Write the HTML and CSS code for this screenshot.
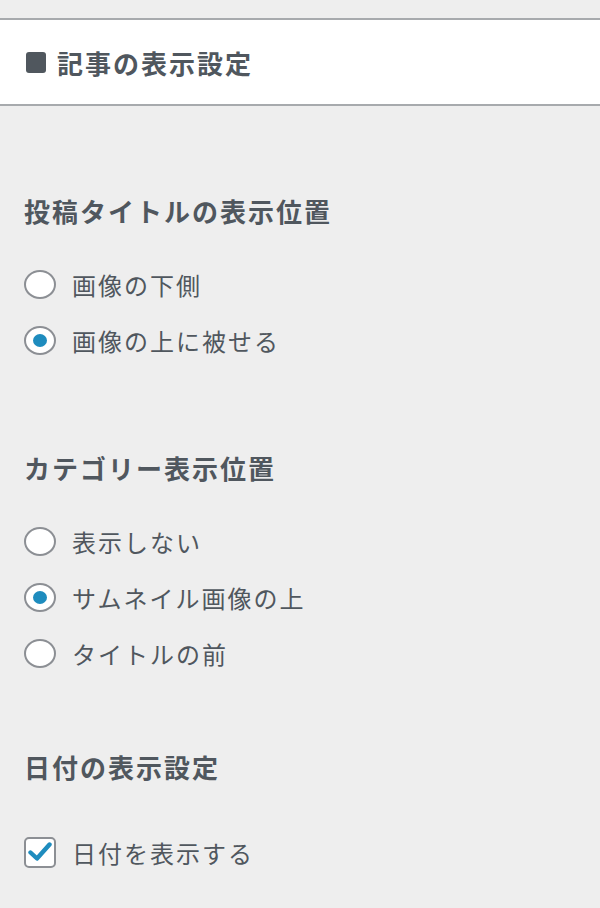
FILE: index.html
```html
<!doctype html>
<html lang="ja">
<head>
    <meta charset="utf-8">
    <title>記事の表示設定</title>
    <link rel="stylesheet" href="styles.css">
</head>
<body>
    <div class="top"></div>

    <div class="section-title">
        <span class="square"></span>
        <h2>記事の表示設定</h2>
    </div>

    <div class="group group-title">
        <p class="heading">投稿タイトルの表示位置</p>
        <label class="row"><span class="radio"></span>画像の下側</label>
        <label class="row"><span class="radio checked"></span>画像の上に被せる</label>
    </div>

    <div class="group group-cat">
        <p class="heading">カテゴリー表示位置</p>
        <label class="row"><span class="radio"></span>表示しない</label>
        <label class="row"><span class="radio checked"></span>サムネイル画像の上</label>
        <label class="row"><span class="radio"></span>タイトルの前</label>
    </div>

    <div class="group group-date">
        <p class="heading">日付の表示設定</p>
        <label class="row row-check">
            <span class="check">
                <svg width="24" height="20" viewBox="0 0 24 20"><path d="M2.5 10.5 L9 16.5 L21.5 2.5" fill="none" stroke="#1e8cbe" stroke-width="4.4" stroke-linecap="round" stroke-linejoin="round"/></svg>
            </span>日付を表示する
        </label>
    </div>
</body>
</html>
```

FILE: styles.css
```css
body {
    margin: 0;
    background: #eeeeee;
    font-family: "Noto Sans CJK JP", "Noto Sans", sans-serif;
    color: #50575e;
}
.top {
    height: 18px;
}
.section-title {
    display: flex;
    align-items: center;
    gap: 11px;
    height: 84px;
    padding-left: 26px;
    background: #ffffff;
    border-top: 2px solid #a7aaad;
    border-bottom: 2px solid #a7aaad;
}
.square {
    width: 20px;
    height: 21px;
    border-radius: 3px;
    background: #50575e;
}
h2 {
    margin: 0;
    font-size: 26px;
    font-weight: bold;
    letter-spacing: 2px;
}
.group {
    padding-left: 24px;
}
.heading {
    margin: 0;
    height: 40px;
    line-height: 40px;
    font-size: 26px;
    font-weight: bold;
    letter-spacing: 2px;
}
.group-title {
    padding-top: 85px;
}
.group-cat {
    padding-top: 80px;
}
.group-date {
    padding-top: 66px;
}
.group-title .heading,
.group-cat .heading {
    margin-bottom: 25px;
}
.group-date .heading {
    margin-bottom: 37px;
}
.row {
    display: flex;
    align-items: center;
    gap: 16px;
    height: 56px;
    font-size: 24px;
    letter-spacing: 2px;
}
.radio {
    position: relative;
    box-sizing: border-box;
    width: 32px;
    height: 29px;
    border: 2px solid #8c8f94;
    border-radius: 50%;
    background: #ffffff;
}
.radio.checked::after {
    content: "";
    position: absolute;
    left: 7px;
    top: 6px;
    width: 14px;
    height: 13px;
    border-radius: 50%;
    background: #1e8cbe;
}
.check {
    box-sizing: border-box;
    display: flex;
    align-items: center;
    justify-content: center;
    width: 32px;
    height: 31px;
    border: 2px solid #8c8f94;
    border-radius: 5px;
    background: #ffffff;
}
```
